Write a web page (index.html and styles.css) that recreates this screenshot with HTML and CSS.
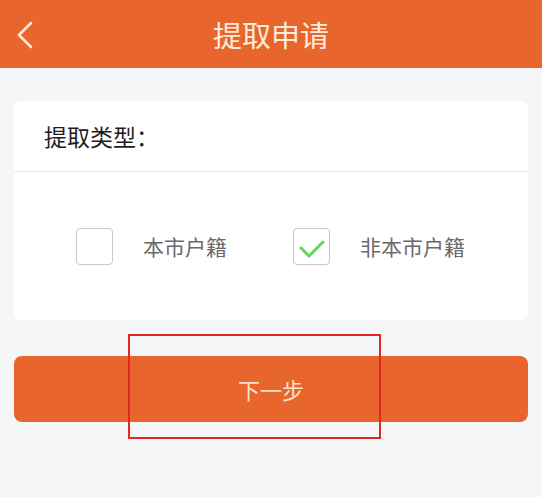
FILE: index.html
```html
<!DOCTYPE html>
<html lang="zh">
<head>
<meta charset="utf-8">
<title>提取申请</title>
<link rel="stylesheet" href="styles.css">
</head>
<body>
<header class="topbar">
  <div class="back">
    <svg width="20" height="28" viewBox="0 0 20 28"><path d="M16 2 L4 14 L16 26" fill="none" stroke="#fdebd9" stroke-width="2.6" stroke-linecap="round" stroke-linejoin="round"/></svg>
  </div>
  <h1 class="title">提取申请</h1>
  <div></div>
</header>
<main class="content">
  <section class="card">
    <div class="card-head">提取类型：</div>
    <div class="options">
      <label class="option">
        <span class="box"></span>
        <span class="opt-text">本市户籍</span>
      </label>
      <label class="option">
        <span class="box">
          <svg width="30" height="24" viewBox="0 0 30 24"><path d="M4 12 L12 20 L26 6" fill="none" stroke="#5fd660" stroke-width="3" stroke-linecap="round" stroke-linejoin="round"/></svg>
        </span>
        <span class="opt-text">非本市户籍</span>
      </label>
    </div>
  </section>
  <button class="next">下一步</button>
</main>
<div class="highlight"></div>
</body>
</html>
```

FILE: styles.css
```css
* { box-sizing: border-box; }
html, body { margin: 0; padding: 0; }
body {
  width: 542px;
  height: 497px;
  background: #f5f6f8;
  font-family: "Noto Sans CJK SC", "Noto Sans", sans-serif;
  position: relative;
  overflow: hidden;
}
.topbar {
  height: 68px;
  background: #e9652e;
  display: grid;
  grid-template-columns: 1fr auto 1fr;
  align-items: center;
}
.back {
  padding-left: 15px;
  display: flex;
  align-items: center;
  padding-top: 2px;
}
.title {
  margin: 0;
  font-size: 29px;
  font-weight: 400;
  color: #fdebd9;
  line-height: 1;
}
.content {
  padding: 33px 14px 0;
}
.card {
  background: #fff;
  border-radius: 6px;
  overflow: hidden;
}
.card-head {
  height: 71px;
  padding-left: 30px;
  display: flex;
  align-items: center;
  font-size: 23px;
  color: #1e1e1e;
  border-bottom: 1.5px solid #e6e6e8;
}
.options {
  height: 148px;
  display: flex;
  align-items: center;
  padding-left: 62px;
  gap: 66px;
}
.option {
  display: flex;
  align-items: center;
  gap: 30px;
}
.box {
  width: 37px;
  height: 37px;
  border: 1.5px solid #c8c8c8;
  border-radius: 4px;
  display: flex;
  align-items: center;
  justify-content: center;
  background: #fff;
}
.box svg { margin-top: 4px; }
.opt-text {
  font-size: 21px;
  color: #6a6a6a;
}
.next {
  display: block;
  width: 100%;
  margin-top: 36px;
  height: 66px;
  border: none;
  border-radius: 8px;
  background: #e9652e;
  color: #fde3cd;
  font-family: "Noto Sans CJK SC", "Noto Sans", sans-serif;
  font-size: 22px;
  padding: 0;
}
.highlight {
  position: absolute;
  left: 128px;
  top: 334px;
  width: 253px;
  height: 105px;
  border: 2px solid #e3281c;
}
```
